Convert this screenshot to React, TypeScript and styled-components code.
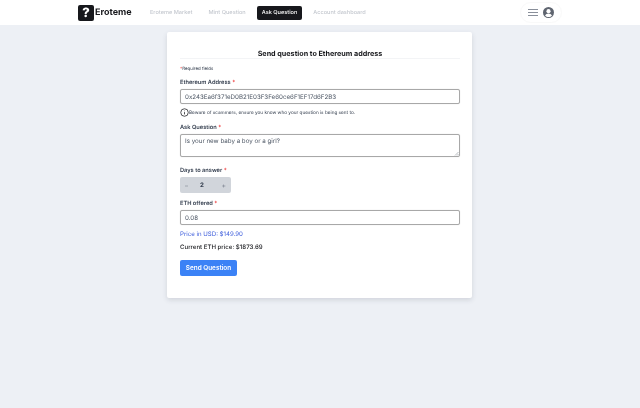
import React from 'react';
import styled, { createGlobalStyle } from 'styled-components';

const GlobalStyle = createGlobalStyle`
  * { box-sizing: border-box; }
  html, body { margin: 0; padding: 0; background: #edf0f5; }
  body {
    font-family: Inter, "Liberation Sans", sans-serif;
    color: #111827;
    text-rendering: geometricPrecision;
  }
`;

const Page = styled.div`
  width: 640px;
  height: 408px;
  overflow: hidden;
  background: #edf0f5;
  will-change: transform;
`;

const Header = styled.header`
  height: 25px;
  background: #fff;
  display: flex;
  align-items: center;
  justify-content: space-between;
  padding: 0 78px;
`;

const Left = styled.div`
  display: flex;
  align-items: center;
`;

const Logo = styled.div`
  display: flex;
  align-items: center;
  width: 67px;
  font-size: 9px;
  font-weight: 700;
  color: #17181c;
`;

const LogoBox = styled.span`
  width: 16px;
  height: 16px;
  margin-right: 1px;
  border-radius: 2px;
  background: #17181c;
  color: #fff;
  display: flex;
  align-items: center;
  justify-content: center;
  font-size: 13px;
  font-weight: 800;
`;

const NavItem = styled.span<{ $active?: boolean }>`
  font-size: 5.6px;
  font-weight: 500;
  height: 14px;
  display: flex;
  align-items: center;
  padding: 1px 5px 0;
  border-radius: 2px;
  margin-right: 6px;
  color: ${(p) => (p.$active ? '#fff' : '#c4c8cf')};
  background: ${(p) => (p.$active ? '#17181c' : 'transparent')};
`;

const Right = styled.div`
  width: 42px;
  height: 21px;
  display: flex;
  align-items: center;
  justify-content: center;
  gap: 5px;
  border: 1px solid #f9f9f9;
  border-radius: 11px;
`;

const Card = styled.main`
  width: 305px;
  height: 266px;
  margin: 7px 0 0 167px;
  background: #fff;
  border-radius: 2px;
  padding: 16px 12px 0 13px;
  box-shadow: 0 2px 5px rgba(60, 70, 90, 0.16);
`;

const Title = styled.h1`
  height: 11px;
  margin: 0;
  padding-top: 1px;
  text-align: center;
  font-size: 7.2px;
  line-height: 10px;
  font-weight: 700;
  color: #17181c;
  border-bottom: 1px solid #f3f4f6;
`;

const Required = styled.p`
  margin: 7px 0 0;
  font-size: 4.4px;
  line-height: 7px;
  color: #374151;
`;

const Star = styled.span`
  color: #ef4444;
`;

const Label = styled.label`
  display: block;
  font-size: 5.7px;
  line-height: 8px;
  font-weight: 600;
  color: #374151;
`;

const Field = styled.div<{ $top: number }>`
  margin-top: ${(p) => p.$top}px;
`;

const TextInput = styled.div`
  height: 15px;
  margin-top: 2px;
  padding: 1px 4px 0;
  display: flex;
  align-items: center;
  background: #fff;
  border: 1px solid #a8a8a8;
  border-radius: 2px;
  box-shadow: 0 0 1px rgba(0, 0, 0, 0.2);
  font-size: 6.2px;
  color: #4b5563;
`;

const TextArea = styled(TextInput)`
  position: relative;
  height: 23px;
  align-items: flex-start;
  padding-top: 3px;
`;

const Grip = styled.svg`
  position: absolute;
  right: 0;
  bottom: 0;
`;

const Hint = styled.div`
  display: flex;
  align-items: flex-start;
  margin-top: 4px;
  font-size: 4.7px;
  line-height: 9px;
  color: #374151;
`;

const HintText = styled.span`
  padding-top: 1px;
`;

const Stepper = styled.div`
  width: 51px;
  height: 16px;
  margin-top: 2px;
  border-radius: 2px;
  background: #d1d5db;
  color: #6b7280;
  display: grid;
  grid-template-columns: 13px 18px 1fr;
  align-items: center;
  justify-items: center;
  font-size: 7px;
  font-weight: 300;
`;

const StepValue = styled.span`
  font-size: 6.2px;
  font-weight: 700;
  color: #374151;
`;

const StepPlus = styled.span`
  justify-self: end;
  padding-right: 5px;
`;

const PriceUsd = styled.p`
  margin: 5px 0 0;
  font-size: 6.1px;
  line-height: 9px;
  color: #3b5bdb;
`;

const PriceEth = styled.p`
  margin: 4px 0 0;
  font-size: 6.1px;
  line-height: 9px;
  font-weight: 500;
  color: #17181c;
`;

const SendButton = styled.button`
  display: block;
  width: 57px;
  height: 16px;
  margin-top: 8px;
  padding: 0;
  border: 0;
  border-radius: 2px;
  background: #3b82f6;
  color: #fff;
  font-family: inherit;
  font-size: 6.4px;
  font-weight: 600;
`;

const Req = () => <Star> *</Star>;

export default function App() {
  return (
    <Page>
      <GlobalStyle />
      <Header>
        <Left>
          <Logo>
            <LogoBox>?</LogoBox>
            Eroteme
          </Logo>
          <NavItem>Eroteme Market</NavItem>
          <NavItem>Mint Question</NavItem>
          <NavItem $active>Ask Question</NavItem>
          <NavItem>Account dashboard</NavItem>
        </Left>
        <Right>
          <svg width="10" height="7" viewBox="0 0 10 7" fill="none" stroke="#6b7280" strokeWidth="0.8">
            <path d="M0 .5h10M0 3.500h10M0 6.500h10" />
          </svg>
          <svg width="11" height="11" viewBox="0 0 24 24">
            <circle cx="12" cy="12" r="12" fill="#5f6570" />
            <circle cx="12" cy="9" r="4.5" fill="#fff" />
            <path d="M4.500 19c1.500-3.500 4-5 7.500-5s6 1.500 7.500 5c-2 2-4.500 3-7.500 3s-5.500-1-7.500-3z" fill="#fff" />
          </svg>
        </Right>
      </Header>
      <Card>
        <Title>Send question to Ethereum address</Title>
        <Required>
          <Star>*</Star>Required fields
        </Required>
        <Field $top={6}>
          <Label>
            Ethereum Address
            <Req />
          </Label>
          <TextInput>0x243Ea6f371eD0B21E03F3Fe60ce6F1EF17d6F2B3</TextInput>
          <Hint>
            <svg width="9" height="9" viewBox="0 0 24 24" fill="none" stroke="#17181c" strokeWidth="2">
              <circle cx="12" cy="12" r="10" />
              <path d="M12 11v6M12 7v1.500" />
            </svg>
            <HintText>Beware of scammers, ensure you know who your question is being sent to.</HintText>
          </Hint>
        </Field>
        <Field $top={6}>
          <Label>
            Ask Question
            <Req />
          </Label>
          <TextArea>
            Is your new baby a boy or a girl?
            <Grip width="5" height="5" viewBox="0 0 5 5" stroke="#8b9099" strokeWidth="0.6">
              <path d="M1 4.500L4.500 1M3 4.500L4.500 3" />
            </Grip>
          </TextArea>
        </Field>
        <Field $top={10}>
          <Label>
            Days to answer
            <Req />
          </Label>
          <Stepper>
            <span>−</span>
            <StepValue>2</StepValue>
            <StepPlus>+</StepPlus>
          </Stepper>
        </Field>
        <Field $top={7}>
          <Label>
            ETH offered
            <Req />
          </Label>
          <TextInput>0.08</TextInput>
        </Field>
        <PriceUsd>Price in USD: $149.90</PriceUsd>
        <PriceEth>Current ETH price: $1873.69</PriceEth>
        <SendButton>Send Question</SendButton>
      </Card>
    </Page>
  );
}
